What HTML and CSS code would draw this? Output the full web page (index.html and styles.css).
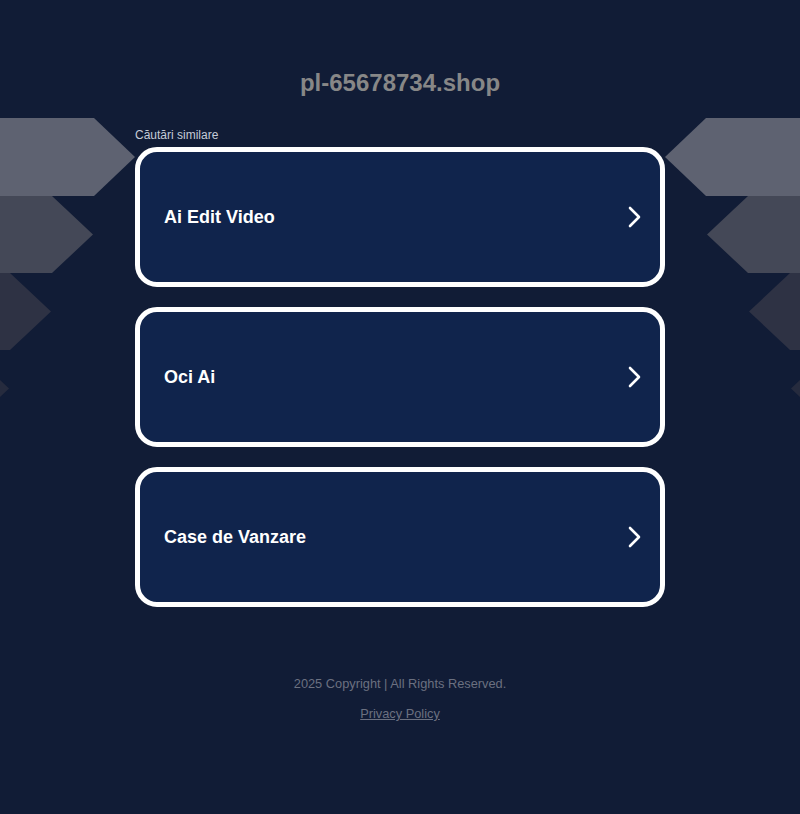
FILE: index.html
```html
<!DOCTYPE html>
<html lang="ro">
<head>
<meta charset="utf-8">
<title>pl-65678734.shop</title>
<link rel="stylesheet" href="styles.css">
</head>
<body>
<svg class="deco deco-left" width="140" height="320" viewBox="0 118 140 320" aria-hidden="true">
  <polygon points="0,118 94,118 135,157 94,196 0,196" fill="#5e6271"/>
  <polygon points="0,196 52,196 93,234.5 52,273 0,273" fill="#444857"/>
  <polygon points="0,273 10,273 51,311.5 10,350 0,350" fill="#2e3244"/>
  <polygon points="-32,350 -32,350 9,388.5 -32,427" fill="#262b3e"/>
</svg>
<svg class="deco deco-right" width="140" height="320" viewBox="660 118 140 320" aria-hidden="true">
  <polygon points="800,118 706,118 665,157 706,196 800,196" fill="#5e6271"/>
  <polygon points="800,196 748,196 707,234.5 748,273 800,273" fill="#444857"/>
  <polygon points="800,273 790,273 749,311.5 790,350 800,350" fill="#2e3244"/>
  <polygon points="832,350 791,388.5 832,427" fill="#262b3e"/>
</svg>
<main class="page">
  <h1 class="domain">pl-65678734.shop</h1>
  <section class="related">
    <p class="related-title">Căutări similare</p>
    <div class="cards">
      <a class="card" href="#"><span class="card-label">Ai Edit Video</span><svg class="chev" width="16" height="24" viewBox="0 0 16 24"><polyline points="3,3 12,12 3,21" fill="none" stroke="#fff" stroke-width="2.6" stroke-linecap="round" stroke-linejoin="round"/></svg></a>
      <a class="card" href="#"><span class="card-label">Oci Ai</span><svg class="chev" width="16" height="24" viewBox="0 0 16 24"><polyline points="3,3 12,12 3,21" fill="none" stroke="#fff" stroke-width="2.6" stroke-linecap="round" stroke-linejoin="round"/></svg></a>
      <a class="card" href="#"><span class="card-label">Case de Vanzare</span><svg class="chev" width="16" height="24" viewBox="0 0 16 24"><polyline points="3,3 12,12 3,21" fill="none" stroke="#fff" stroke-width="2.6" stroke-linecap="round" stroke-linejoin="round"/></svg></a>
    </div>
  </section>
  <footer class="footer">
    <p class="copy">2025 Copyright | All Rights Reserved.</p>
    <a class="privacy" href="#">Privacy Policy</a>
  </footer>
</main>
</body>
</html>
```
FILE: styles.css
```css
html, body {
  margin: 0;
  padding: 0;
  background: #111c36;
  font-family: "Liberation Sans", Arial, sans-serif;
  min-height: 814px;
}
body { position: relative; overflow: hidden; }
.deco { position: absolute; top: 118px; display: block; }
.deco-left { left: 0; }
.deco-right { right: 0; }
.page {
  position: relative;
  width: 530px;
  margin: 0 auto;
  padding-top: 69px;
  display: flex;
  flex-direction: column;
}
.domain {
  margin: 0;
  text-align: center;
  font-size: 24px;
  line-height: 28px;
  font-weight: bold;
  color: #878787;
}
.related { margin-top: 30px; }
.related-title {
  margin: 1px 0 5px;
  font-size: 12px;
  line-height: 14px;
  color: #c5cbd6;
}
.cards { display: flex; flex-direction: column; gap: 20px; }
.card {
  box-sizing: border-box;
  height: 140px;
  border: 5px solid #fff;
  border-radius: 22px;
  background: #10244c;
  display: flex;
  align-items: center;
  justify-content: space-between;
  padding: 0 17px 0 24px;
  text-decoration: none;
  color: #fff;
}
.card-label { font-size: 18px; font-weight: bold; line-height: 22px; }
.chev { display: block; }
.footer {
  margin-top: 69px;
  text-align: center;
  font-size: 12.8px;
  line-height: 16px;
  color: #6b7080;
}
.copy { margin: 0 0 14px; }
.privacy { color: #6b7080; text-decoration: underline; }
```
